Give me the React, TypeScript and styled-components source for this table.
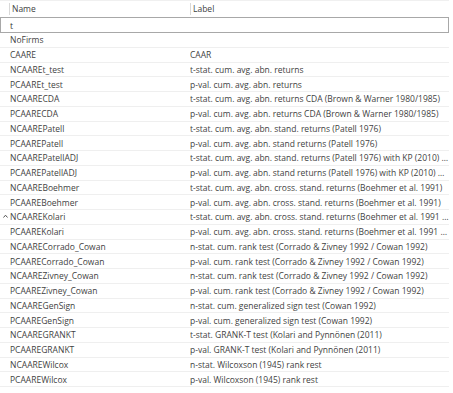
import styled, { createGlobalStyle } from "styled-components";

const GlobalStyle = createGlobalStyle`
    html, body {
        margin: 0;
        padding: 0;
        background: #ffffff;
    }
    body {
        font-family: "Open Sans", "Noto Sans", sans-serif;
        font-size: 8.5px;
        color: #3f3f3f;
    }
`

type Row = { name: string; label: string; cursor?: boolean };

const rows: Row[] = [
    { name: "NoFirms", label: "" },
    { name: "CAARE", label: "CAAR" },
    { name: "NCAAREt_test", label: "t-stat. cum. avg. abn. returns" },
    { name: "PCAAREt_test", label: "p-val. cum. avg. abn. returns" },
    { name: "NCAARECDA", label: "t-stat. cum. avg. abn. returns CDA (Brown & Warner 1980/1985)" },
    { name: "PCAARECDA", label: "p-val. cum. avg. abn. returns CDA (Brown & Warner 1980/1985)" },
    { name: "NCAAREPatell", label: "t-stat. cum. avg. abn. stand. returns (Patell 1976)" },
    { name: "PCAAREPatell", label: "p-val. cum. avg. abn. stand returns (Patell 1976)" },
    { name: "NCAAREPatellADJ", label: "t-stat. cum. avg. abn. stand. returns (Patell 1976) with KP (2010) adj." },
    { name: "PCAAREPatellADJ", label: "p-val. cum. avg. abn. stand returns (Patell 1976) with KP (2010) adj." },
    { name: "NCAAREBoehmer", label: "t-stat. cum. avg. abn. cross. stand. returns (Boehmer et al. 1991)" },
    { name: "PCAAREBoehmer", label: "p-val. cum. avg. abn. cross. stand. returns (Boehmer et al. 1991)" },
    { name: "NCAAREKolari", label: "t-stat. cum. avg. abn. cross. stand. returns (Boehmer et al. 1991 / Kolari & Pynnönen 2010)", cursor: true },
    { name: "PCAAREKolari", label: "p-val. cum. avg. abn. cross. stand. returns (Boehmer et al. 1991 / Kolari & Pynnönen 2010)" },
    { name: "NCAARECorrado_Cowan", label: "n-stat. cum. rank test (Corrado & Zivney 1992 / Cowan 1992)" },
    { name: "PCAARECorrado_Cowan", label: "p-val. cum. rank test (Corrado & Zivney 1992 / Cowan 1992)" },
    { name: "NCAAREZivney_Cowan", label: "n-stat. cum. rank test (Corrado & Zivney 1992 / Cowan 1992)" },
    { name: "PCAAREZivney_Cowan", label: "p-val. cum. rank test (Corrado & Zivney 1992 / Cowan 1992)" },
    { name: "NCAAREGenSign", label: "n-stat. cum. generalized sign test (Cowan 1992)" },
    { name: "PCAAREGenSign", label: "p-val. cum. generalized sign test (Cowan 1992)" },
    { name: "NCAAREGRANKT", label: "t-stat. GRANK-T test (Kolari and Pynnönen (2011)" },
    { name: "PCAAREGRANKT", label: "p-val. GRANK-T test (Kolari and Pynnönen (2011)" },
    { name: "NCAAREWilcox", label: "n-stat. Wilcoxson (1945) rank rest" },
    { name: "PCAAREWilcox", label: "p-val. Wilcoxson (1945) rank rest" },
];

const Table = styled.div`
    width: 449px;
    display: flex;
    flex-direction: column;
`

const Header = styled.div`
    height: 16px;
    display: grid;
    grid-template-columns: 190px 1fr;
    align-items: center;
    border-top: 1px solid #f0f0f0;
`

const HeaderCell = styled.div<{ $pad: number }>`
    height: 14px;
    line-height: 14px;
    padding-left: ${p => p.$pad}px;
    position: relative;
    &::before {
        content: "";
        position: absolute;
        left: ${p => p.$pad - 3}px;
        top: 1px;
        bottom: 1px;
        width: 1px;
        background: #d8d8d8;
    }
`

const FilterRow = styled.div`
    height: 14px;
    border: 1px solid #a8a8a8;
    display: flex;
    align-items: center;
    padding-left: 9px;
    color: #333333;
`

const DataRow = styled.div`
    height: 14.75px;
    display: grid;
    grid-template-columns: 190px 1fr;
    align-items: center;
    border-bottom: 1px solid #efefef;
    box-sizing: border-box;
    white-space: nowrap;
`

const NameCell = styled.div`
    padding-left: 10px;
    position: relative;
    overflow: hidden;
`

const LabelCell = styled.div`
    overflow: hidden;
    text-overflow: ellipsis;
`

const Cursor = styled.svg`
    position: absolute;
    left: 3px;
    top: 3px;
`

export default function App() {
    return (
        <>
            <GlobalStyle />
            <Table>
                <Header>
                    <HeaderCell $pad={12}>Name</HeaderCell>
                    <HeaderCell $pad={3}>Label</HeaderCell>
                </Header>
                <FilterRow>t</FilterRow>
                {rows.map(r => (
                    <DataRow key={r.name}>
                        <NameCell>
                            {r.cursor && (
                                <Cursor width="5" height="5" viewBox="0 0 5 5">
                                    <path d="M0.5 3.5 L2.5 1.2 L4.5 3.5" fill="none" stroke="#555" strokeWidth="1" />
                                </Cursor>
                            )}
                            {r.name}
                        </NameCell>
                        <LabelCell>{r.label}</LabelCell>
                    </DataRow>
                ))}
            </Table>
        </>
    );
}
